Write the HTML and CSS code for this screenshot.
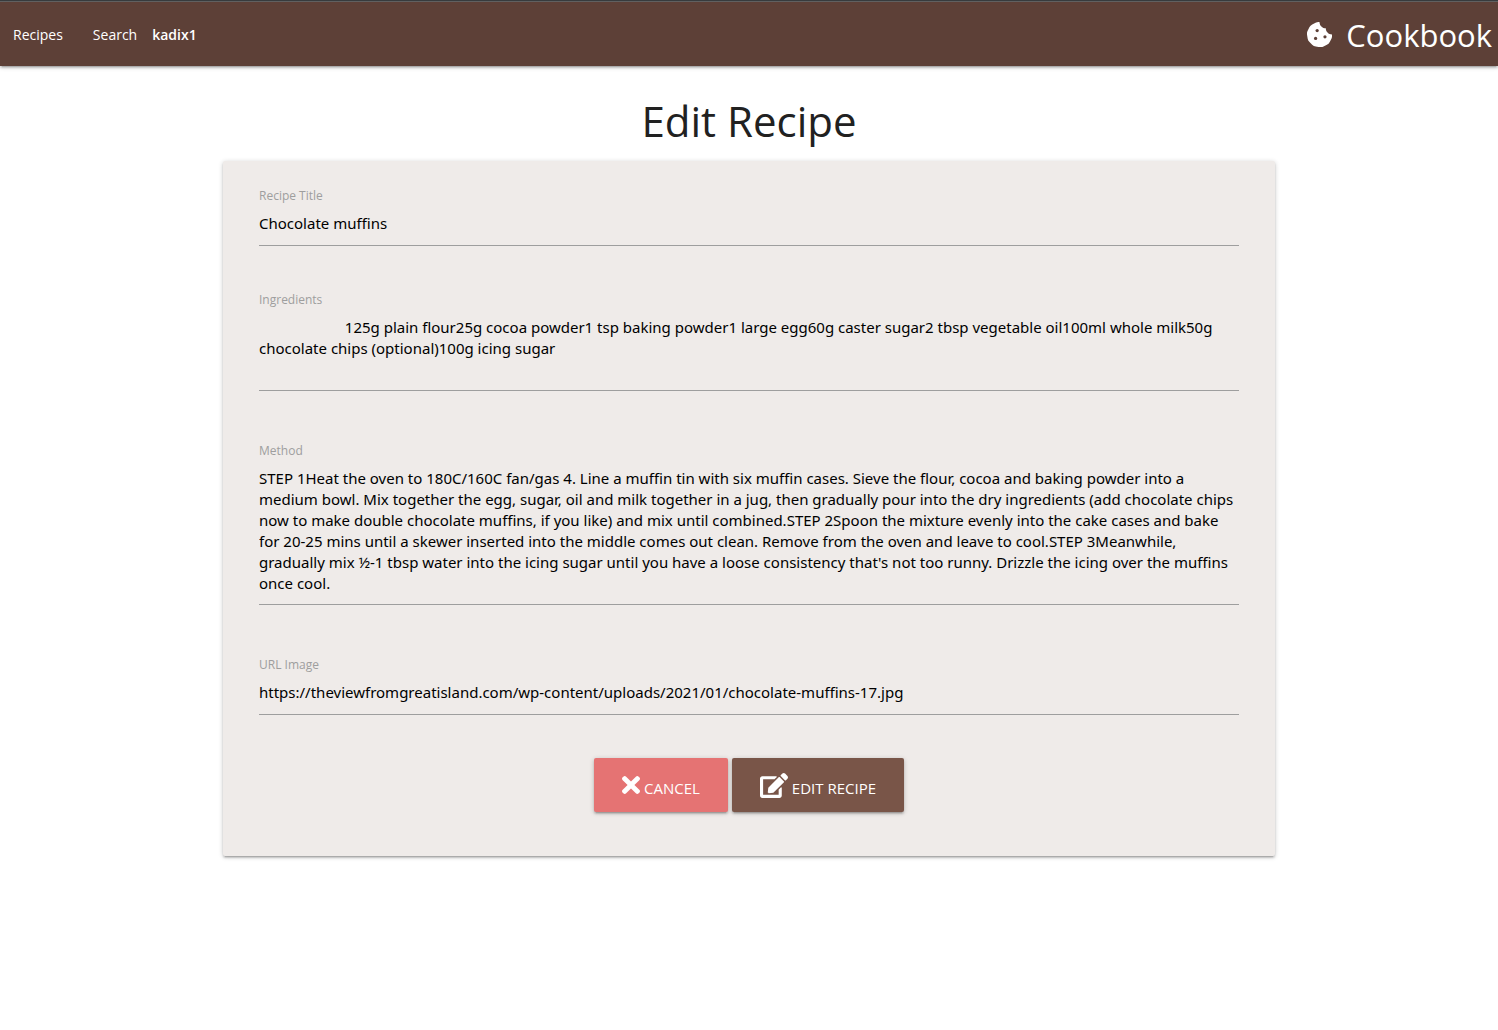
FILE: index.html
```html
<!DOCTYPE html>
<html lang="en">
<head>
<meta charset="utf-8">
<meta name="viewport" content="width=device-width, initial-scale=1">
<title>Cookbook - Edit Recipe</title>
<link rel="stylesheet" href="styles.css">
</head>
<body>
<header class="navbar">
  <nav class="nav-links">
    <a href="#recipes">Recipes</a>
    <a href="#search">Search</a>
    <a class="user" href="#profile">kadix1</a>
  </nav>
  <a class="brand" href="#home">
    <svg class="icon-cookie" viewBox="0 0 512 512" aria-hidden="true"><path fill="currentColor" d="M510.400 255.800c-69.500-1.100-125.600-57.800-125.600-127.600-69.700 0-126.400-56.100-127.600-125.600-27.900-4.300-56.500.1-81.700 13l-69.100 35.200a132.300 132.300 0 0 0-57.800 57.800L13.600 177.500a132.800 132.800 0 0 0-12.900 82l12.100 76.500c4.500 28.200 17.800 54.300 38 74.500l55 55c20.100 20.100 46.100 33.300 74.200 37.800l77 12.200a132.800 132.800 0 0 0 81.500-12.900l69.100-35.200a132.300 132.300 0 0 0 57.800-57.800l35.200-69.100c12.800-25.200 17.300-53.700 13.100-81.500z"/><circle cx="208" cy="176" r="33" fill="#5d4037"/><circle cx="176" cy="336" r="33" fill="#5d4037"/><circle cx="368" cy="304" r="33" fill="#5d4037"/></svg>
    <span>Cookbook</span>
  </a>
</header>
<main>
  <h1>Edit Recipe</h1>
  <form class="card">
    <div class="field">
      <label for="title">Recipe Title</label>
      <input id="title" type="text" value="Chocolate muffins">
    </div>
    <div class="field field-long">
      <label for="ingredients">Ingredients</label>
      <textarea id="ingredients" rows="3">                      125g plain flour25g cocoa powder1 tsp baking powder1 large egg60g caster sugar2 tbsp vegetable oil100ml whole milk50g chocolate chips (optional)100g icing sugar</textarea>
    </div>
    <div class="field field-long">
      <label for="method">Method</label>
      <textarea id="method" rows="6">STEP 1Heat the oven to 180C/160C fan/gas 4. Line a muffin tin with six muffin cases. Sieve the flour, cocoa and baking powder into a medium bowl. Mix together the egg, sugar, oil and milk together in a jug, then gradually pour into the dry ingredients (add chocolate chips now to make double chocolate muffins, if you like) and mix until combined.STEP 2Spoon the mixture evenly into the cake cases and bake for 20-25 mins until a skewer inserted into the middle comes out clean. Remove from the oven and leave to cool.STEP 3Meanwhile, gradually mix ½-1 tbsp water into the icing sugar until you have a loose consistency that's not too runny. Drizzle the icing over the muffins once cool.</textarea>
    </div>
    <div class="field">
      <label for="image">URL Image</label>
      <input id="image" type="text" value="https://theviewfromgreatisland.com/wp-content/uploads/2021/01/chocolate-muffins-17.jpg">
    </div>
    <div class="actions">
      <button class="btn btn-cancel" type="button">
        <svg class="icon-times" viewBox="0 0 352 352" aria-hidden="true"><path fill="currentColor" d="M242.700 176l100.100-100.100c12.300-12.300 12.300-32.200 0-44.500L320.600 9.200c-12.300-12.300-32.200-12.300-44.500 0L176 109.300 75.900 9.200c-12.300-12.300-32.200-12.300-44.500 0L9.200 31.400c-12.300 12.300-12.300 32.200 0 44.500L109.300 176 9.200 276.100c-12.300 12.300-12.300 32.200 0 44.500l22.200 22.200c12.300 12.300 32.200 12.300 44.500 0L176 242.700l100.100 100.100c12.300 12.300 32.200 12.300 44.500 0l22.200-22.200c12.300-12.300 12.300-32.200 0-44.500L242.700 176z"/></svg>
        <span>CANCEL</span>
      </button>
      <button class="btn btn-edit" type="submit">
        <svg class="icon-edit" viewBox="0 0 576 512" aria-hidden="true"><path fill="currentColor" d="M402.600 83.200l90.200 90.200c3.800 3.800 3.800 10 0 13.800L274.400 405.600l-92.800 10.300c-12.400 1.400-22.900-9.100-21.500-21.500l10.300-92.800L388.800 83.200c3.800-3.800 10-3.800 13.800 0zm162-22.900l-48.800-48.800c-15.200-15.200-39.900-15.200-55.200 0l-35.400 35.400c-3.800 3.800-3.800 10 0 13.800l90.200 90.200c3.800 3.800 10 3.800 13.800 0l35.400-35.400c15.200-15.300 15.200-40 0-55.200zM384 346.200V448H64V128h229.800c3.200 0 6.200-1.300 8.500-3.500l40-40c7.600-7.600 2.200-20.500-8.500-20.500H48C21.500 64 0 85.500 0 112v352c0 26.500 21.500 48 48 48h352c26.500 0 48-21.500 48-48V306.200c0-10.700-12.900-16-20.500-8.500l-40 40c-2.200 2.300-3.500 5.300-3.500 8.500z"/></svg>
        <span>EDIT RECIPE</span>
      </button>
    </div>
  </form>
</main>
</body>
</html>
```
FILE: styles.css
```css
* {
  box-sizing: border-box;
}

body {
  margin: 0;
  background: #fff;
  color: #212121;
  font-family: "Open Sans", "Noto Sans", sans-serif;
  font-size: 15px;
}

.navbar {
  display: flex;
  justify-content: space-between;
  align-items: center;
  height: 66px;
  padding: 2px 6px 0 13px;
  border-top: 1px solid #373b3d;
  background: #5d4037;
  box-shadow: inset 0 1px #606060, 0 2px 2px rgba(0, 0, 0, .14), 0 3px 1px -2px rgba(0, 0, 0, .12), 0 1px 5px rgba(0, 0, 0, .2);
}

.navbar a {
  color: #fff;
  text-decoration: none;
}

.nav-links {
  display: flex;
  font-size: 14px;
}

.nav-links a {
  margin-right: 30px;
}

.nav-links a + a {
  margin-right: 15px;
}

.nav-links .user {
  font-weight: 600;
}

.brand {
  display: flex;
  align-items: center;
  gap: 14px;
  font-size: 31px;
}

.icon-cookie {
  width: 25px;
  height: 25px;
}

h1 {
  margin: 27px 0 12px;
  font-size: 42px;
  font-weight: 400;
  line-height: 56px;
  text-align: center;
}

.card {
  width: 90%;
  max-width: 1052px;
  margin: 0 auto 32px;
  padding: 27px 36px 44px;
  border-radius: 2px;
  background: #efebe9;
  box-shadow: 0 2px 2px rgba(0, 0, 0, .14), 0 3px 1px -2px rgba(0, 0, 0, .12), 0 1px 5px rgba(0, 0, 0, .2);
}

.field {
  display: flex;
  flex-direction: column;
  margin-bottom: 46px;
}

.field-long {
  margin-bottom: 52px;
}

label {
  color: #9e9e9e;
  font-size: 12px;
  line-height: 16px;
}

input,
textarea {
  display: block;
  width: 100%;
  margin: 0;
  border: 0;
  border-bottom: 1px solid #9e9e9e;
  border-radius: 0;
  outline: 0;
  background: transparent;
  color: #000;
  font-family: "Noto Sans", "Open Sans", sans-serif;
  font-size: 15px;
}

input {
  height: 42px;
  padding: 0 0 3px;
}

textarea {
  padding: 9px 0 10px;
  line-height: 21px;
  resize: none;
  overflow: hidden;
}

.actions {
  display: flex;
  justify-content: center;
  gap: 4px;
  margin-top: -3px;
}

.btn {
  display: flex;
  align-items: center;
  gap: 4px;
  height: 54px;
  padding: 0 28px;
  border: 0;
  border-radius: 2px;
  color: #fff;
  font-family: inherit;
  font-size: 15px;
  box-shadow: 0 2px 2px rgba(0, 0, 0, .14), 0 3px 1px -2px rgba(0, 0, 0, .12), 0 1px 5px rgba(0, 0, 0, .2);
}

.btn span {
  padding-top: 6px;
}

.btn-cancel {
  background: #e57373;
}

.btn-edit {
  background: #795548;
}

.icon-times {
  width: 18px;
  height: 18px;
}

.icon-edit {
  width: 28px;
  height: 25px;
}
```
